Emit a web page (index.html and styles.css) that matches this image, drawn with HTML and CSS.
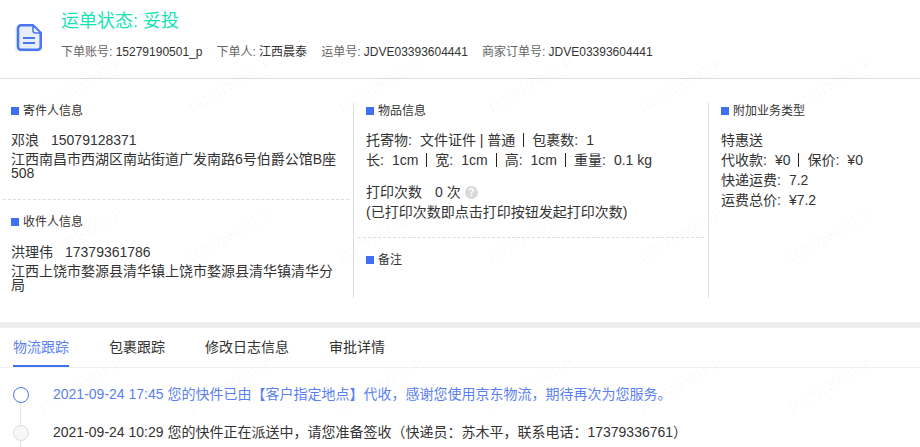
FILE: index.html
```html
<!DOCTYPE html>
<html lang="zh-CN">
<head>
<meta charset="utf-8">
<title>运单详情</title>
<link rel="stylesheet" href="styles.css">
</head>
<body>
<div class="page">
  <header class="head">
    <svg class="doc-icon" width="32" height="32" viewBox="0 0 32 32" aria-hidden="true">
      <path class="doc-shade" d="M2 5h18l8 8v17H2z"/>
      <path class="doc-line" d="M8 3.300h12l7.700 7.700v13.700a3 3 0 0 1-3 3H8a3 3 0 0 1-3-3V6.300a3 3 0 0 1 3-3z"/>
      <path class="doc-fold" d="M20 3.300v5.200a2.500 2.500 0 0 0 2.500 2.500h5.200z"/>
      <path class="doc-bar" d="M10 16h12M10 21h12"/>
    </svg>
    <div class="head-text">
      <h1 class="status">运单状态: 妥投</h1>
      <div class="meta">
        <span><i>下单账号:</i> 15279190501_p</span>
        <span><i>下单人:</i> 江西晨泰</span>
        <span><i>运单号:</i> JDVE03393604441</span>
        <span><i>商家订单号:</i> JDVE03393604441</span>
      </div>
    </div>
  </header>

  <section class="info">
    <div class="col col-a">
      <div class="block block-sender">
        <h2 class="block-title">寄件人信息</h2>
        <p class="person">邓浪<span class="phone">15079128371</span></p>
        <p class="addr">江西南昌市西湖区南站街道广发南路6号伯爵公馆B座508</p>
      </div>
      <div class="block block-receiver">
        <h2 class="block-title">收件人信息</h2>
        <p class="person">洪理伟<span class="phone">17379361786</span></p>
        <p class="addr">江西上饶市婺源县清华镇上饶市婺源县清华镇清华分局</p>
      </div>
    </div>
    <div class="col col-b">
      <div class="block block-goods">
        <h2 class="block-title">物品信息</h2>
        <p class="line">托寄物:<span class="val">文件证件 | 普通</span><span class="sep"></span>包裹数:<span class="val">1</span></p>
        <p class="line">长:<span class="val">1cm</span><span class="sep"></span>宽:<span class="val">1cm</span><span class="sep"></span>高:<span class="val">1cm</span><span class="sep"></span>重量:<span class="val">0.1 kg</span></p>
        <p class="line line-print">打印次数<span class="count">0 次</span><span class="help">?</span></p>
        <p class="line">(已打印次数即点击打印按钮发起打印次数)</p>
      </div>
      <div class="block block-note">
        <h2 class="block-title">备注</h2>
      </div>
    </div>
    <div class="col col-c">
      <div class="block">
        <h2 class="block-title">附加业务类型</h2>
        <p class="line">特惠送</p>
        <p class="line">代收款:<span class="val">¥0</span><span class="sep"></span>保价:<span class="val">¥0</span></p>
        <p class="line">快递运费:<span class="val">7.2</span></p>
        <p class="line">运费总价:<span class="val">¥7.2</span></p>
      </div>
    </div>
  </section>

  <div class="band"></div>

  <nav class="tabs">
    <a class="tab tab-on">物流跟踪</a>
    <a class="tab">包裹跟踪</a>
    <a class="tab">修改日志信息</a>
    <a class="tab">审批详情</a>
  </nav>

  <ul class="track">
    <li class="step step-on">2021-09-24 17:45 您的快件已由【客户指定地点】代收，感谢您使用京东物流，期待再次为您服务。</li>
    <li class="step">2021-09-24 10:29 您的快件正在派送中，请您准备签收（快递员：苏木平，联系电话：17379336761）</li>
  </ul>

  <div class="marks" aria-hidden="true">
    <span>15279190501_P</span><span>15279190501_P</span><span>15279190501_P</span><span>15279190501_P</span><span>15279190501_P</span><span>15279190501_P</span>
    <span>15279190501_P</span><span>15279190501_P</span><span>15279190501_P</span><span>15279190501_P</span><span>15279190501_P</span><span>15279190501_P</span>
    <span>15279190501_P</span><span>15279190501_P</span><span>15279190501_P</span><span>15279190501_P</span><span>15279190501_P</span><span>15279190501_P</span>
  </div>
</div>
</body>
</html>
```
FILE: styles.css
```css
* { box-sizing: border-box; }
html, body { margin: 0; padding: 0; background: #fff; }
body {
  font-family: "Liberation Sans", "Noto Sans CJK SC", sans-serif;
  font-size: 14px;
  color: #333;
}
h1, h2, p, ul { margin: 0; padding: 0; font-weight: 400; }
i { font-style: normal; }

.page { position: relative; width: 920px; height: 447px; overflow: hidden; }

.head {
  display: flex;
  height: 79px;
  border-bottom: 1px solid #ddd;
  padding: 10px 0 0 13px;
}
.doc-icon { margin: 12px 16px 0 0; flex: none; }
.doc-shade { fill: #f1f4fe; }
.doc-line { fill: #e9eefc; stroke: #4a76f2; stroke-width: 2.6; stroke-linejoin: round; }
.doc-fold { fill: #f4f6fe; stroke: #4a76f2; stroke-width: 1.6; stroke-linejoin: round; }
.doc-bar { fill: none; stroke: #4a76f2; stroke-width: 2.2; }

.head-text { display: flex; flex-direction: column; }
.status { font-size: 18px; line-height: 22px; color: #14e3b5; }
.meta { display: flex; gap: 14px; margin-top: 11px; font-size: 12px; line-height: 18px; color: #333; }
.meta i { color: #666; }

.info { display: flex; height: 243px; padding-top: 24px; padding-bottom: 24px; }
.col { border-right: 1px solid #ddd; height: 195px; }
.col-a { width: 354px; padding: 0 4px 0 3px; }
.col-b { width: 355px; padding: 0 4px; }
.col-c { flex: 1; padding: 0 4px; border-right: 0; }

.block { padding-left: 8px; }
.block-sender { height: 97px; border-bottom: 1px dashed #ddd; padding-right: 4px; }
.block-receiver { padding-top: 15px; padding-right: 4px; }
.block-goods { height: 135px; border-bottom: 1px dashed #ddd; margin-bottom: 15px; }

.block-title {
  display: flex;
  align-items: center;
  gap: 4px;
  font-size: 12px;
  line-height: 14px;
  height: 14px;
  margin-bottom: 13px;
}
.block:first-child .block-title { height: 15px; padding-top: 1px; margin-bottom: 12px; }
.block-title::before { content: ""; width: 8px; height: 8px; background: #3f70f3; flex: none; }

.person { line-height: 20px; }
.phone { margin-left: 12px; }
.addr { line-height: 14px; margin-top: 2px; }

.line { line-height: 20px; }
.line-print { margin-top: 12px; display: flex; align-items: center; }
.val { margin-left: 8px; }
.count { margin-left: 13px; }
.sep { display: inline-block; width: 1px; height: 14px; background: #222; margin: 0 8px; vertical-align: -2px; }
.help {
  width: 13px;
  height: 13px;
  border-radius: 50%;
  background: #d9d9d9;
  color: #fff;
  font-size: 10px;
  font-weight: 700;
  line-height: 13px;
  text-align: center;
  margin-left: 4px;
}

.band { height: 6px; background: #eee; }

.tabs { display: flex; gap: 40px; height: 40px; padding-left: 13px; border-bottom: 1px solid #f0f0f0; }
.tab { line-height: 39px; height: 39px; color: #333; }
.tab-on { color: #5b7ff0; border-bottom: 2px solid #3f70f3; }

.track { list-style: none; padding: 7px 0 0 53px; }
.step { position: relative; height: 38px; line-height: 38px; }
.step::before {
  content: "";
  position: absolute;
  left: -33px;
  top: 19px;
  width: 1px;
  height: 38px;
  background: #e4e4e4;
}
.step::after {
  content: "";
  position: absolute;
  left: -40px;
  top: 12px;
  width: 14px;
  height: 14px;
  border-radius: 50%;
  border: 1px solid #ddd;
  background: #f7f7f7;
}
.step-on { color: #5b7ff0; }
.step-on::after { border: 1.5px solid #4a76f2; background: #fff; }

.marks {
  position: absolute;
  left: 5px;
  top: 10px;
  display: grid;
  grid-template-columns: repeat(6, 150px);
  grid-auto-rows: 150px;
  place-items: center;
  pointer-events: none;
}
.marks span {
  font-size: 13px;
  color: rgba(0, 0, 0, 0.04);
  white-space: nowrap;
  transform: rotate(-30deg);
}
```
